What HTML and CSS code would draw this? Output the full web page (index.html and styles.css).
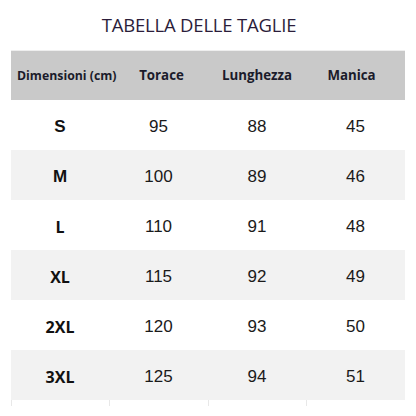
FILE: index.html
```html
<!DOCTYPE html>
<html lang="it">
<head>
<meta charset="utf-8">
<link rel="stylesheet" href="styles.css">
</head>
<body>
<div class="page">
  <h1 class="title">TABELLA DELLE TAGLIE</h1>
  <div class="table">
    <div class="row head">
      <div class="cell dim">Dimensioni (cm)</div>
      <div class="cell tor">Torace</div>
      <div class="cell">Lunghezza</div>
      <div class="cell man">Manica</div>
    </div>
    <div class="row">
      <div class="cell size">S</div><div class="cell">95</div><div class="cell">88</div><div class="cell">45</div>
    </div>
    <div class="row alt">
      <div class="cell size">M</div><div class="cell">100</div><div class="cell">89</div><div class="cell">46</div>
    </div>
    <div class="row">
      <div class="cell size alt-font">L</div><div class="cell">110</div><div class="cell">91</div><div class="cell">48</div>
    </div>
    <div class="row alt">
      <div class="cell size alt-font">XL</div><div class="cell">115</div><div class="cell">92</div><div class="cell">49</div>
    </div>
    <div class="row">
      <div class="cell size alt-font">2XL</div><div class="cell">120</div><div class="cell">93</div><div class="cell">50</div>
    </div>
    <div class="row alt">
      <div class="cell size alt-font">3XL</div><div class="cell">125</div><div class="cell">94</div><div class="cell">51</div>
    </div>
    <div class="row foot">
      <div class="cell"></div><div class="cell"></div><div class="cell"></div><div class="cell"></div>
    </div>
  </div>
</div>
</body>
</html>
```

FILE: styles.css
```css
html, body {
  margin: 0;
  padding: 0;
  background: #ffffff;
}
.page {
  width: 416px;
  height: 416px;
  overflow: hidden;
}
.title {
  margin: 0;
  height: 50px;
  display: flex;
  align-items: center;
  justify-content: center;
  font-family: "Open Sans", "Noto Sans", sans-serif;
  font-weight: 400;
  font-size: 18.5px;
  letter-spacing: -0.2px;
  color: #2b1d3a;
  padding: 0 18px 2px 0;
  box-sizing: border-box;
}
.table {
  margin-left: 11px;
  width: 394px;
}
.row {
  display: grid;
  grid-template-columns: 98px 99px 98px 99px;
  height: 50px;
  background: #ffffff;
}
.row.alt {
  background: #f2f2f2;
}
.row.head {
  background: #c9c9c9;
  border-top: 1px solid #eeeeee;
  box-sizing: border-box;
}
.row.foot {
  height: 6px;
}
.row.foot .cell {
  border-left: 1px solid #e8e8e8;
  padding: 0;
}
.cell {
  display: flex;
  align-items: center;
  justify-content: center;
  font-family: "Liberation Sans", Arial, sans-serif;
  font-size: 17px;
  color: #1a1a1a;
  white-space: nowrap;
  padding-top: 3px;
}
.head .cell {
  font-family: "Open Sans", "Noto Sans", sans-serif;
  font-weight: 700;
  font-size: 13.3px;
  color: #1b1b2b;
  padding-top: 0;
  padding-bottom: 2px;
}
.head .cell.dim {
  justify-content: flex-start;
  padding-left: 6px;
  font-size: 12.3px;
  padding-top: 2px;
}
.head .cell.tor {
  padding-left: 6px;
}
.head .cell.man {
  padding-right: 8px;
}
.cell.size {
  font-weight: 700;
  color: #111111;
}
.cell.alt-font {
  font-family: "Open Sans", "Noto Sans", sans-serif;
  font-size: 16px;
}
```
